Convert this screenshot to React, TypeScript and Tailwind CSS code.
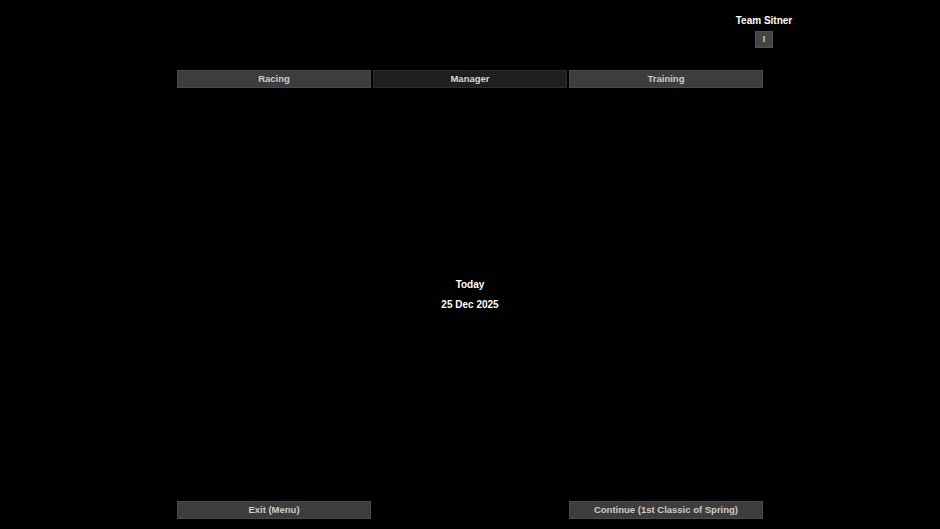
import React from 'react';

const font = { fontFamily: '"Liberation Sans", Arial, sans-serif' };

const Btn: React.FC<{ label: string; active?: boolean }> = ({ label, active }) => (
  <button
    className={
      'w-[194px] h-[18px] flex items-center justify-center border text-[9.5px] font-bold leading-none ' +
      (active
        ? 'bg-[#1f1f1f] border-[#2e2e2e] text-[#d8d8d8]'
        : 'bg-[#3d3d3d] border-[#4a4a4a] text-[#cccccc]')
    }
  >
    {label}
  </button>
);

export default function App() {
  return (
    <div className="h-[529px] w-[940px] bg-black flex flex-col" style={font}>
      <div className="flex justify-end pr-[146px] pt-[14px]">
        <div className="w-[60px] flex flex-col items-center">
          <div className="text-white text-[10px] font-bold leading-[14px] whitespace-nowrap">Team Sitner</div>
          <div className="mt-[3px] w-[18px] h-[17px] bg-[#444] border border-[#505050] flex items-center justify-center text-[#cfcfcf] text-[9px] font-bold leading-none">
            I
          </div>
        </div>
      </div>

      <div className="mt-[22px] mx-auto flex gap-[2px]">
        <Btn label="Racing" />
        <Btn label="Manager" active />
        <Btn label="Training" />
      </div>

      <div className="flex-1 flex flex-col items-center justify-center gap-[6px] pt-[1px] text-white text-[10px] font-bold leading-[14px]">
        <div>Today</div>
        <div>25 Dec 2025</div>
      </div>

      <div className="mx-auto w-[586px] flex justify-between pb-[10px]">
        <Btn label="Exit (Menu)" />
        <Btn label="Continue (1st Classic of Spring)" />
      </div>
    </div>
  );
}
